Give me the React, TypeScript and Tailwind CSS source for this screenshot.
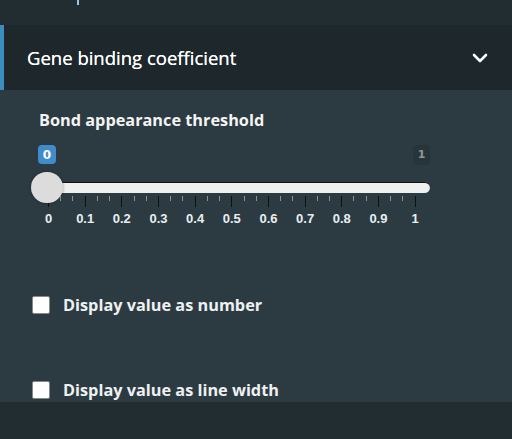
import React from "react";

const VALUES = [0, 0.1, 0.2, 0.3, 0.4, 0.5, 0.6, 0.7, 0.8, 0.9, 1];
const tickFont = { fontFamily: '"DejaVu Sans", sans-serif' };
const gridFont = { fontFamily: '"Liberation Sans", Arial, sans-serif' };

// 31 marks: every third one is a major tick with a value under it
function SliderGrid() {
  const marks = Array.from({ length: 31 }, (_, i) => i);
  return (
    <div className="ml-[48px] w-[368px] mt-[3px] flex justify-between">
      {marks.map((i) => {
        const major = i % 3 === 0;
        return (
          <div key={i} className="w-px flex flex-col items-center">
            <div className={major ? "w-px h-[11px] bg-[#111]" : "w-px h-[5px] bg-[#8a9396]"} />
            {major && (
              <span
                className="mt-[5px] whitespace-nowrap text-[13px] font-bold leading-[14px] text-[#e8eef2]"
                style={gridFont}
              >
                {VALUES[i / 3]}
              </span>
            )}
          </div>
        );
      })}
    </div>
  );
}

function Checkbox({ label, className }: { label: string; className: string }) {
  return (
    <label className={"flex items-center gap-[13px] pl-[32px] h-[18px] " + className}>
      <span className="w-[18px] h-[18px] bg-white border border-[#888] rounded-[2px] shrink-0" />
      <span className="text-[16.3px] font-bold text-[#eef0f1] leading-[22px]">{label}</span>
    </label>
  );
}

export default function App() {
  return (
    <div
      className="w-[512px] h-[439px] bg-[#222d32] flex flex-col overflow-hidden"
      style={{ fontFamily: '"Open Sans", sans-serif' }}
    >
      <div className="h-[25px] pl-[77px]">
        <div className="w-[2px] h-[5px] bg-[#9fc3dc]" />
      </div>

      {/* Header */}
      <div className="h-[65px] bg-[#1e282c] border-l-4 border-[#3c8dbc] flex items-center justify-between pl-[23px] pr-[24px]">
        <span className="text-[18.5px] text-white [text-shadow:0_0_0.4px_white]">Gene binding coefficient</span>
        <svg width="16" height="10" viewBox="0 0 16 10" fill="none">
          <path d="M2 2l6 6 6-6" stroke="white" strokeWidth="2.6" strokeLinecap="round" strokeLinejoin="round" />
        </svg>
      </div>

      {/* Body */}
      <div className="h-[312px] bg-[#2c3b41] pt-[19px]">
        <div className="pl-[39px] text-[16.3px] font-bold text-[#f4f4f4] leading-[22px]">
          Bond appearance threshold
        </div>

        <div className="flex justify-between pl-[38px] pr-[82px] mt-[14px]" style={tickFont}>
          <span className="w-[18px] h-[19px] rounded-[4px] bg-[#428bca] text-white text-[12px] font-bold flex items-center justify-center">
            0
          </span>
          <span className="w-[17px] h-[20px] rounded-[4px] bg-[#27353a] text-[#8a969b] text-[11px] font-bold flex items-center justify-center">
            1
          </span>
        </div>

        <div className="relative ml-[40px] w-[390px] h-[11px] mt-[17px] rounded-full bg-[#f0f0f0] border-t border-[#111]">
          <div className="absolute -left-[9px] -top-[11px] w-[32px] h-[31px] rounded-full bg-[#dcdcdc] shadow-[0_0_3px_rgba(0,0,0,0.4)]" />
        </div>

        <SliderGrid />

        <Checkbox label="Display value as number" className="mt-[70px]" />
        <Checkbox label="Display value as line width" className="mt-[67px]" />
      </div>
    </div>
  );
}
